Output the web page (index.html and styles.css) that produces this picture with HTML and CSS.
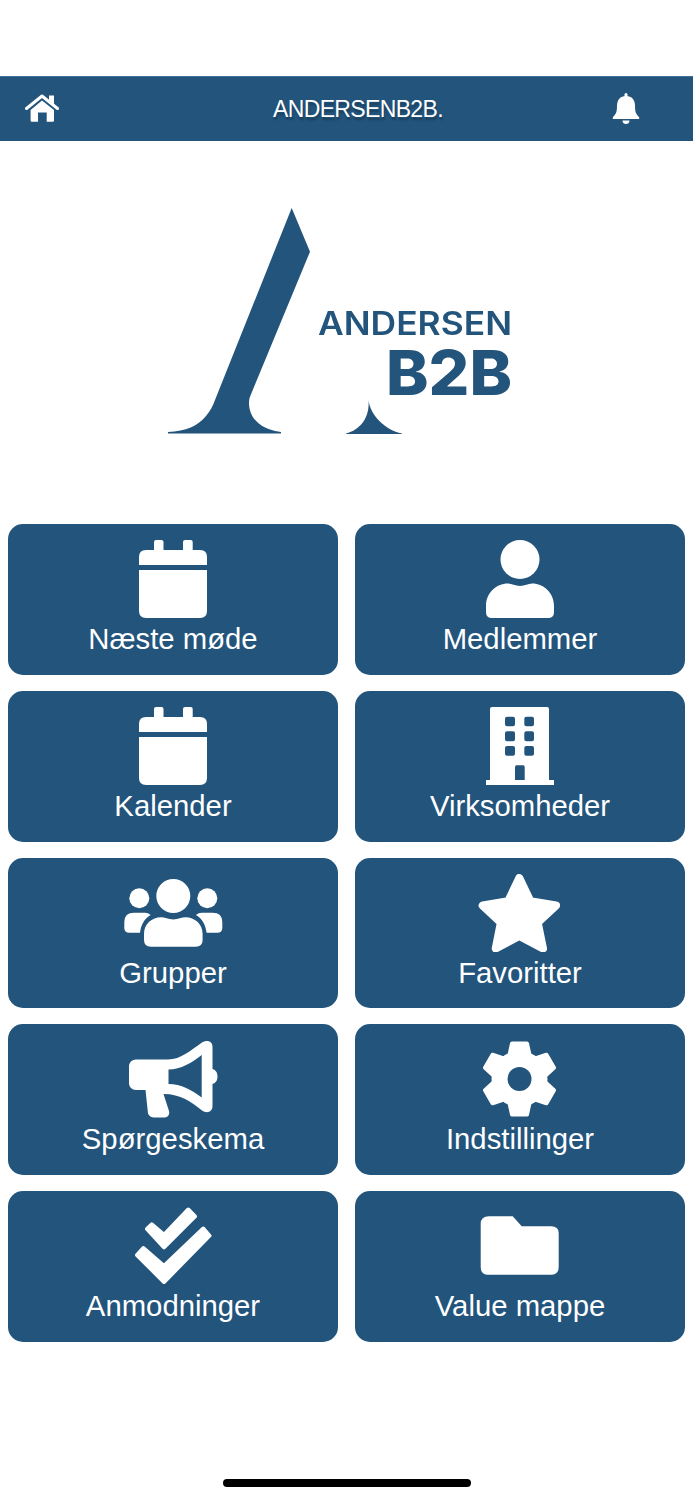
FILE: index.html
```html
<!DOCTYPE html>
<html lang="en">

<head>
    <meta charset="UTF-8">
    <meta name="viewport" content="width=device-width, initial-scale=1.0">
    <title>AndersenB2B</title>
    <link rel="stylesheet" href="styles.css">
</head>

<body>
    <!-- Top bar -->
    <header class="top-bar">
        <svg class="home-icon" viewBox="0 0 34 28">
            <path d="M24 1.500h5v9l-5-4z" />
            <path d="M1.500 14.500L17 2l15.500 12.500" fill="none" stroke="#fff" stroke-width="3" stroke-linecap="round" stroke-linejoin="round" />
            <path fill-rule="evenodd" d="M17 6.500L29 16v10.500q0 1.200-1.200 1.200H6.800q-1.200 0-1.200-1.200V16zM13 18.500v9.200h8.700v-9.200z" />
        </svg>
        <div class="title">ANDERSENB2B.</div>
        <svg class="bell-icon" viewBox="0 0 28 31">
            <rect x="12.500" y="0" width="3" height="5" rx="1.500" />
            <path d="M14 3C8 3 5 7 5 13C5 19 4 21 1 24Q0 26 2 26H26Q28 26 27 24C24 21 23 19 23 13C23 7 20 3 14 3Z" />
            <path d="M10.500 27.500H17.500C17.500 30 16 31 14 31C12 31 10.500 30 10.500 27.500Z" />
        </svg>
    </header>

    <!-- Logo -->
    <div class="logo">
        <svg viewBox="0 0 380 260" width="380" height="260">
            <path d="M141.700 18L160 61.700L100 206.700C97 215 99 238 131 242V243.500H18V242C36 241 48 236 56 226C60 221 63 216 65 210Z" />
            <path d="M218.500 210C220 225 235 240 252 243.500V244H196V243.500C210 240 220 228 218.500 210Z" />
            <text class="logo-name" x="168" y="145" textLength="194" lengthAdjust="spacingAndGlyphs">ANDERSEN</text>
            <text class="logo-b2b" x="236" y="205" textLength="126" lengthAdjust="spacingAndGlyphs">B2B</text>
        </svg>
    </div>

    <!-- Menu -->
    <main class="menu">
        <a class="tile">
            <svg class="tile-icon" viewBox="0 0 100 78">
                <path d="M23 10H31V2q0-2 2-2h5.500q2 0 2 2v8H60V2q0-2 2-2h5.700q2 0 2 2v8H77q7 0 7 7v8H16v-8q0-7 7-7z" />
                <path d="M16 30h68v41q0 7-7 7H23q-7 0-7-7z" />
            </svg>
            <span>Næste møde</span>
        </a>
        <a class="tile">
            <svg class="tile-icon" viewBox="0 0 100 78">
                <circle cx="50" cy="19.500" r="19.500" />
                <path d="M22 78Q16 78 16 72V66C16 53 26 43.500 38 43.500C42 43.500 45 46 50 46C55 46 58 43.500 62 43.500C74 43.500 84 53 84 66V72Q84 78 78 78Z" />
            </svg>
            <span>Medlemmer</span>
        </a>
        <a class="tile">
            <svg class="tile-icon" viewBox="0 0 100 78">
                <path d="M23 10H31V2q0-2 2-2h5.500q2 0 2 2v8H60V2q0-2 2-2h5.700q2 0 2 2v8H77q7 0 7 7v8H16v-8q0-7 7-7z" />
                <path d="M16 30h68v41q0 7-7 7H23q-7 0-7-7z" />
            </svg>
            <span>Kalender</span>
        </a>
        <a class="tile">
            <svg class="tile-icon" viewBox="0 0 100 78">
                <path fill-rule="evenodd" d="M22 0H77q2 0 2 2V73H84V78H16V73H20V2q0-2 2-2ZM37 9.700q-2 0-2 2V17.300q0 2 2 2H43q2 0 2-2V11.700q0-2-2-2ZM56.300 9.700q-2 0-2 2V17.300q0 2 2 2H62q2 0 2-2V11.700q0-2-2-2ZM37 24.300q-2 0-2 2V32.300q0 2 2 2H43q2 0 2-2V26.300q0-2-2-2ZM56.300 24.300q-2 0-2 2V32.300q0 2 2 2H62q2 0 2-2V26.300q0-2-2-2ZM37 39q-2 0-2 2V46.700q0 2 2 2H43q2 0 2-2V41q0-2-2-2ZM56.300 39q-2 0-2 2V46.700q0 2 2 2H62q2 0 2-2V41q0-2-2-2ZM46.500 58.300q-1.500 0-1.500 2V73H54.700V60.300q0-2-1.500-2Z" />
            </svg>
            <span>Virksomheder</span>
        </a>
        <a class="tile">
            <svg class="tile-icon" viewBox="0 0 100 78">
                <circle cx="50.300" cy="22" r="17" />
                <circle cx="16.300" cy="24.300" r="10" />
                <circle cx="84.300" cy="24.300" r="10" />
                <path d="M28 72.700Q21 72.700 21 66V60C21 50 29 43.300 38 43.300C42 43.300 45 45.500 50.300 45.500C55.600 45.500 58.600 43.300 62.600 43.300C71.600 43.300 79.600 50 79.600 60V66Q79.600 72.700 72.600 72.700Z" />
                <path d="M11 38.700H22Q25 38.700 27.700 41C21 45 18 51 17 58.700H6.300Q1.300 58.700 1.300 54V48Q1.300 38.700 11 38.700Z" />
                <path d="M89.600 38.700H78.600Q75.600 38.700 72.900 41C79.600 45 82.600 51 83.600 58.700H94.300Q99.300 58.700 99.300 54V48Q99.300 38.700 89.600 38.700Z" />
            </svg>
            <span>Grupper</span>
        </a>
        <a class="tile">
            <svg class="tile-icon" viewBox="0 0 100 78">
                <polygon points="49.300,4 60.400,27.200 86,31.500 67.700,48.600 73,74.500 49.300,62 25.700,74.500 30.900,48.600 12.700,31.500 38.200,27.200" stroke="#fff" stroke-width="8" stroke-linejoin="round" />
            </svg>
            <span>Favoritter</span>
        </a>
        <a class="tile">
            <svg class="tile-icon" viewBox="0 0 100 78">
                <path fill-rule="evenodd" d="M13 19.500H45C58 19.500 68 10 79 2.500C84-.5 89.500 1 89.500 7V29C93 30 94.500 33 94.500 36.500C94.500 40 93 43 89.500 44V66C89.500 72 84 74 79 70.500C68 62 58 54 40.500 54L46 71C47 74.500 45 77.500 42 77.500H31C28.500 77.500 26 76 25 73.500L22.500 50H13C9 50 6 47 6 43V26.500C6 22.500 9 19.500 13 19.500ZM45.500 29.500V44C58 44 69 50 78.700 57.500V15C69 22.500 58 29.500 45.500 29.500Z" />
            </svg>
            <span>Spørgeskema</span>
        </a>
        <a class="tile">
            <svg class="tile-icon" viewBox="0 0 100 78">
                <g transform="translate(49.500 39)" stroke="#fff" stroke-width="4" stroke-linejoin="round">
                    <polygon points="-7.500,-35.500 7.500,-35.500 10,-24 10,24 7.500,35.500 -7.500,35.500 -10,24 -10,-24" />
                    <polygon points="-7.500,-35.500 7.500,-35.500 10,-24 10,24 7.500,35.500 -7.500,35.500 -10,24 -10,-24" transform="rotate(60)" />
                    <polygon points="-7.500,-35.500 7.500,-35.500 10,-24 10,24 7.500,35.500 -7.500,35.500 -10,24 -10,-24" transform="rotate(120)" />
                    <circle r="26" />
                    <circle class="gear-hole" r="12" stroke="none" />
                </g>
            </svg>
            <span>Indstillinger</span>
        </a>
        <a class="tile">
            <svg class="tile-icon" viewBox="0 0 100 78">
                <g stroke="#fff" stroke-width="4" stroke-linejoin="round">
                    <polygon points="24,22 28.700,17.400 41,27.800 65.300,2.500 72,9.300 41,40.300" />
                    <polygon points="14,48 20.300,41 41,59 80.300,21.500 86.500,28.700 41,75" />
                </g>
            </svg>
            <span>Anmodninger</span>
        </a>
        <a class="tile">
            <svg class="tile-icon" viewBox="0 0 100 78">
                <path d="M19 9.300H42.700L51.700 19.300H81Q88.700 19.300 88.700 26V60Q88.700 67.700 81 67.700H18Q10.700 67.700 10.700 60V17Q10.700 9.300 19 9.300Z" />
            </svg>
            <span>Value mappe</span>
        </a>
    </main>

    <div class="home-bar"></div>
</body>

</html>
```

FILE: styles.css
```css
body {
    font-family: 'Liberation Sans', Arial, sans-serif;
    background-color: #fff;
    margin: 0;
    padding: 0;
    height: 1500px;
    overflow: hidden;
}

/* Top bar */
.top-bar {
    display: flex;
    align-items: center;
    box-sizing: border-box;
    height: 65px;
    margin-top: 76px;
    padding: 0 53px 0 25px;
    background-color: #22547c;
    border-top: 1px solid #3f7099;
}

.top-bar svg {
    fill: #fff;
    flex: none;
}

.home-icon {
    width: 34px;
    height: 28px;
    margin-top: -2px;
}

.bell-icon {
    width: 28px;
    height: 31px;
    margin-top: -1px;
}

.title {
    flex: 1;
    padding-left: 45px;
    text-align: center;
    color: #fff;
    font-size: 23px;
    letter-spacing: -0.65px;
    text-shadow: 1px 3px 2px rgba(0, 0, 0, 0.25);
}

/* Logo */
.logo {
    height: 334px;
    padding: 49px 0 0 150px;
}

.logo svg {
    display: block;
    fill: #22547c;
    filter: blur(0.5px);
}

.logo-name {
    font-family: 'Inter', sans-serif;
    font-size: 32px;
    font-weight: 600;
}

.logo-b2b {
    font-family: 'Inter', sans-serif;
    font-size: 62px;
    font-weight: 800;
}

/* Menu grid */
.menu {
    display: grid;
    grid-template-columns: 1fr 1fr;
    grid-auto-rows: 150.8px;
    gap: 16px 17px;
    padding: 0 8px;
}

.tile {
    display: flex;
    flex-direction: column;
    align-items: center;
    padding-top: 16px;
    background-color: #22547c;
    border-radius: 15px;
    color: #fff;
    font-size: 29.3px;
    line-height: 40px;
}

.tile-icon {
    width: 100px;
    height: 78px;
    fill: #fff;
    margin-bottom: 1px;
}

.gear-hole {
    fill: #22547c;
}

.home-bar {
    width: 248px;
    height: 8px;
    margin: 137px 0 0 223px;
    background-color: #000;
    border-radius: 4px;
}
```
